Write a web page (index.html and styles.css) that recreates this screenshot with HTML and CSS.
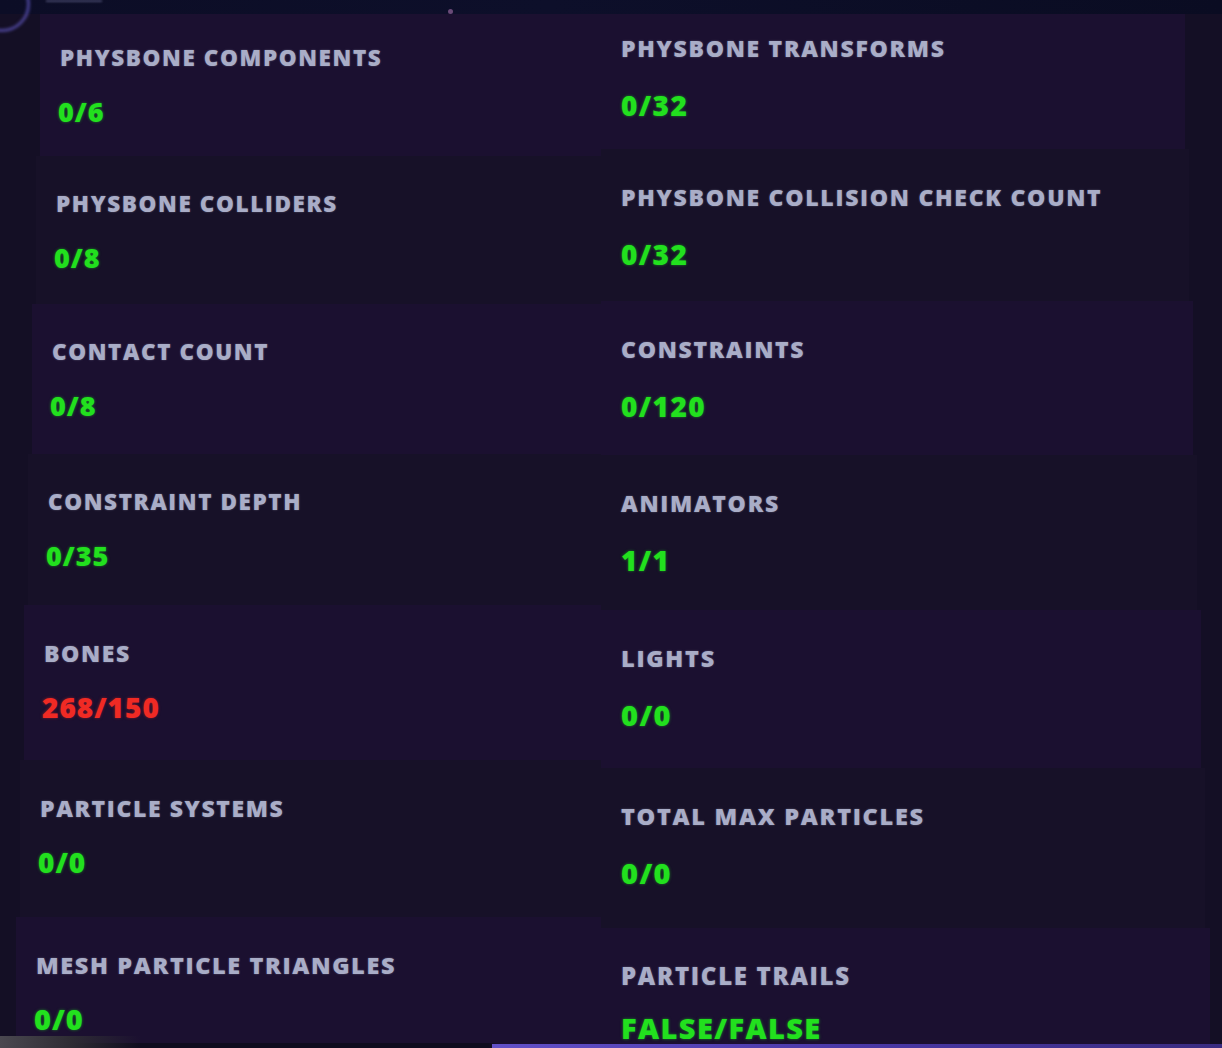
FILE: index.html
```html
<!DOCTYPE html>
<html>
<head>
<meta charset="utf-8">
<link rel="stylesheet" href="styles.css">
</head>
<body>
<div class="screen">
  <div class="topbar"><span class="arc"></span><span class="cut"></span><span class="dot"></span></div>
  <div class="panel">
    <div class="col left">
      <div class="cell tint r1"><div class="label">PHYSBONE COMPONENTS</div><div class="value">0/6</div></div>
      <div class="cell r2"><div class="label">PHYSBONE COLLIDERS</div><div class="value">0/8</div></div>
      <div class="cell tint r3"><div class="label">CONTACT COUNT</div><div class="value">0/8</div></div>
      <div class="cell r4"><div class="label">CONSTRAINT DEPTH</div><div class="value">0/35</div></div>
      <div class="cell tint r5"><div class="label">BONES</div><div class="value bad">268/150</div></div>
      <div class="cell r6"><div class="label">PARTICLE SYSTEMS</div><div class="value">0/0</div></div>
      <div class="cell tint r7"><div class="label">MESH PARTICLE TRIANGLES</div><div class="value">0/0</div></div>
    </div>
    <div class="col right">
      <div class="cell tint r1"><div class="label">PHYSBONE TRANSFORMS</div><div class="value">0/32</div></div>
      <div class="cell r2"><div class="label">PHYSBONE COLLISION CHECK COUNT</div><div class="value">0/32</div></div>
      <div class="cell tint r3"><div class="label">CONSTRAINTS</div><div class="value">0/120</div></div>
      <div class="cell r4"><div class="label">ANIMATORS</div><div class="value">1/1</div></div>
      <div class="cell tint r5"><div class="label">LIGHTS</div><div class="value">0/0</div></div>
      <div class="cell r6"><div class="label">TOTAL MAX PARTICLES</div><div class="value">0/0</div></div>
      <div class="cell tint r7"><div class="label">PARTICLE TRAILS</div><div class="value">FALSE/FALSE</div></div>
    </div>
  </div>
  <div class="bottombar"><span class="grey"></span><span class="violet"></span></div>
</div>
</body>
</html>
```

FILE: styles.css
```css
* { box-sizing: border-box; }
html, body { margin: 0; padding: 0; }
body {
  background: #130f24;
  font-family: "Open Sans", "Noto Sans", sans-serif;
  overflow: hidden;
}
.screen {
  width: 1222px;
  height: 1048px;
  position: relative;
  overflow: hidden;
  background: #140f25;
}
.topbar {
  height: 14px;
  background: linear-gradient(90deg, #0c0d26 0%, #0d0f2a 45%, #0a0c22 100%);
  position: relative;
}
.arc {
  position: absolute;
  left: -26px;
  top: -24px;
  width: 56px;
  height: 56px;
  border-radius: 50%;
  border: 3px solid rgba(110, 100, 220, 0.6);
  filter: blur(1.5px);
  z-index: 2;
}
.cut {
  position: absolute;
  left: 46px;
  top: 0;
  width: 56px;
  height: 2px;
  background: rgba(170, 170, 220, 0.35);
  filter: blur(1px);
}
.dot {
  position: absolute;
  left: 448px;
  top: 9px;
  width: 5px;
  height: 5px;
  border-radius: 50%;
  background: #6a4a78;
}
.panel {
  display: grid;
  grid-template-columns: 601px 621px;
  height: 1026px;
}
.col {
  display: flex;
  flex-direction: column;
}
.cell {
  background: #171128;
  flex: none;
}
.cell.tint { background: #1b1030; }

.label {
  color: #a9adc7;
  font-weight: 800;
  line-height: 24px;
  white-space: nowrap;
  text-shadow: 0 0 2px rgba(169, 173, 199, 0.45);
}
.left .label { font-size: 22.5px; letter-spacing: 1.6px; }
.right .label { font-size: 23px; letter-spacing: 1.7px; }

.value {
  color: #22e01e;
  font-weight: 800;
  font-size: 27px;
  line-height: 32px;
  letter-spacing: 1px;
  white-space: nowrap;
  text-shadow: 0 0 3px rgba(30, 230, 30, 0.55);
}
.left .value { margin-top: 26px; margin-left: -2px; }
.right .value { margin-top: 29px; font-size: 28px; letter-spacing: 1.4px; }
.value.bad {
  color: #f02a24;
  text-shadow: 0 0 3px rgba(240, 40, 36, 0.5);
}

/* left column: panel edge leans leftward further down */
.left .cell { padding-left: 20px; }
.left .r1 { margin-left: 40px; height: 142px; padding-top: 32px; }
.left .r2 { margin-left: 36px; height: 148px; padding-top: 36px; }
.left .r3 { margin-left: 32px; height: 150px; padding-top: 36px; }
.left .r4 { margin-left: 28px; height: 151px; padding-top: 36px; }
.left .r5 { margin-left: 24px; height: 155px; padding-top: 36px; }
.left .r6 { margin-left: 20px; height: 157px; padding-top: 36px; }
.left .r7 { margin-left: 16px; height: 131px; padding-top: 36px; }

.right .cell { padding-left: 20px; }
.right .r1 { margin-right: 37px; height: 135px; padding-top: 22px; }
.right .r2 { margin-right: 33px; height: 152px; padding-top: 36px; }
.right .r3 { margin-right: 29px; height: 154px; padding-top: 36px; }
.right .r4 { margin-right: 25px; height: 155px; padding-top: 36px; }
.right .r5 { margin-right: 21px; height: 158px; padding-top: 36px; }
.right .r6 { margin-right: 17px; height: 160px; padding-top: 36px; }
.right .r7 { margin-right: 12px; height: 121px; padding-top: 36px; }

.left .r5 .label, .left .r6 .label { font-size: 23px; }
.left .r7 .label { font-size: 23.5px; }
.right .r5 .label, .right .r6 .label { font-size: 23.5px; }
.right .r7 .label { font-size: 24px; }
.r5 .value, .r6 .value { font-size: 28px; }
.right .r5 .value, .right .r6 .value { font-size: 29px; }
.r7 .value { font-size: 29px; }
.right .r7 .value { font-size: 29px; margin-top: 24px; }

.bottombar {
  position: absolute;
  left: 0;
  bottom: 0;
  width: 1222px;
  height: 5px;
  background: linear-gradient(90deg, #0f0c1e 0%, #0f0c1e 40%, rgba(15, 12, 30, 0) 41%);
}
.grey {
  position: absolute;
  left: 0;
  bottom: 0;
  width: 140px;
  height: 12px;
  background: linear-gradient(90deg, #4a4850, #2e2c34 50%, rgba(20, 18, 28, 0));
}
.violet {
  position: absolute;
  left: 492px;
  bottom: 0;
  width: 730px;
  height: 4px;
  background: linear-gradient(90deg, #6250c8, #4a38a6 50%, #3a2c80);
}
```
